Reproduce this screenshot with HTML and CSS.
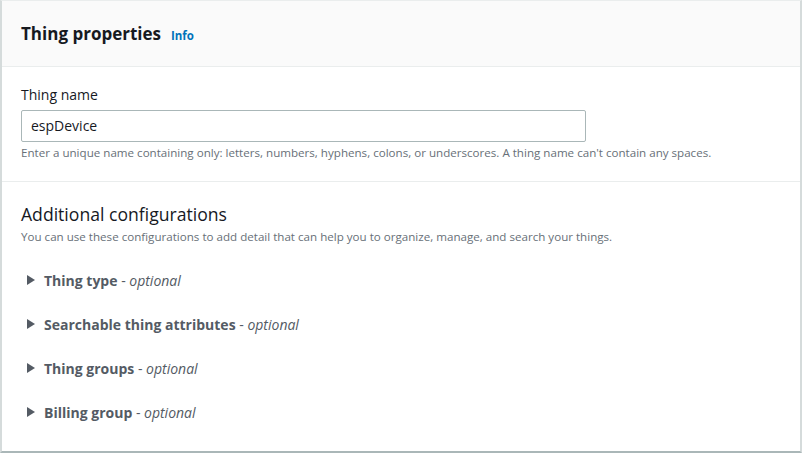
FILE: index.html
```html
<!DOCTYPE html>
<html>
<head>
<meta charset="utf-8">
<link rel="stylesheet" href="styles.css">
</head>
<body>
<div class="card">
  <div class="card-header">
    <h2 class="title">Thing properties</h2>
    <a class="info" href="#">Info</a>
  </div>
  <div class="section name-section">
    <label class="label">Thing name</label>
    <div class="input">espDevice</div>
    <div class="hint">Enter a unique name containing only: letters, numbers, hyphens, colons, or underscores. A thing name can't contain any spaces.</div>
  </div>
  <div class="section extra-section">
    <h3 class="subtitle">Additional configurations</h3>
    <div class="desc">You can use these configurations to add detail that can help you to organize, manage, and search your things.</div>
    <ul class="expanders">
      <li class="expander"><span class="caret"></span><span class="exp-text"><b>Thing type</b> - <i>optional</i></span></li>
      <li class="expander"><span class="caret"></span><span class="exp-text"><b>Searchable thing attributes</b> - <i>optional</i></span></li>
      <li class="expander"><span class="caret"></span><span class="exp-text"><b>Thing groups</b> - <i>optional</i></span></li>
      <li class="expander"><span class="caret"></span><span class="exp-text"><b>Billing group</b> - <i>optional</i></span></li>
    </ul>
  </div>
</div>
</body>
</html>
```

FILE: styles.css
```css
* { box-sizing: border-box; }
html, body { margin: 0; padding: 0; background: #fff; }
body {
  font-family: "Open Sans", "Noto Sans", sans-serif;
  color: #16191f;
}
.card {
  width: 802px;
  height: 453px;
  border: 1px solid #eaeded;
  border-left: 2px solid #d5dbdb;
  border-right: 2px solid #d5dbdb;
  border-bottom: 2px solid #aab7b8;
  background: #fff;
}
.card-header {
  height: 66px;
  background: #fafafa;
  border-bottom: 1px solid #eaeded;
  display: flex;
  align-items: baseline;
  padding: 20px 19px 0;
}
.title {
  margin: 0;
  font-size: 17px;
  font-weight: 700;
  line-height: 26px;
  color: #16191f;
}
.info {
  margin-left: 10px;
  font-size: 11.5px;
  font-weight: 700;
  color: #0073bb;
  text-decoration: none;
}
.section { padding: 0 19px; }
.name-section {
  padding-top: 18px;
  height: 115px;
  border-bottom: 1px solid #eaeded;
}
.label {
  display: block;
  font-size: 14px;
  line-height: 20px;
  margin-bottom: 5px;
}
.input {
  width: 565px;
  height: 32px;
  border: 1px solid #aab7b8;
  border-radius: 2px;
  padding: 0 9px;
  font-size: 14px;
  line-height: 30px;
}
.hint {
  margin-top: 3px;
  font-size: 11.6px;
  line-height: 16px;
  color: #687078;
}
.extra-section { padding-top: 19px; }
.subtitle {
  margin: 0;
  font-size: 17.6px;
  font-weight: 400;
  line-height: 26px;
}
.desc {
  font-size: 11.6px;
  line-height: 16px;
  color: #687078;
  margin-top: 2px;
}
.expanders {
  list-style: none;
  margin: 13px 0 0;
  padding: 0;
}
.expander {
  display: flex;
  align-items: center;
  height: 44px;
  font-size: 14px;
  color: #545b64;
}
.exp-text { white-space: pre; }
.expander b { font-weight: 700; }
.expander i { font-style: italic; }
.caret {
  width: 0;
  height: 0;
  border-top: 5px solid transparent;
  border-bottom: 5px solid transparent;
  border-left: 8px solid #545b64;
  margin: 0 9px 0 6px;
}
```
